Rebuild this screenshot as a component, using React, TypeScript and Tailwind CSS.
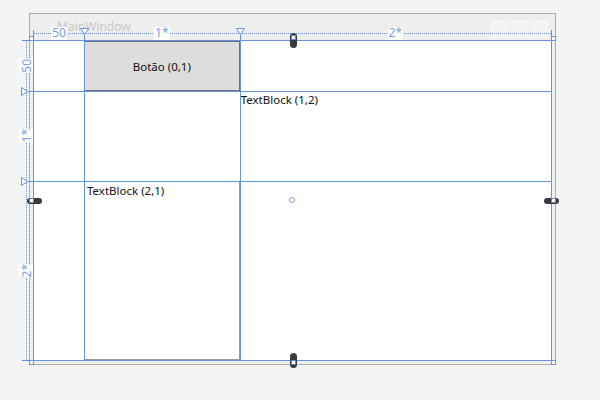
const blue = "#6592e4";

const Handle = ({ className, sq }: { className: string; sq: string }) => (
  <div className={`absolute rounded-full bg-[#3a3a3a] ${className}`}>
    <div className={`absolute h-[5px] w-[5px] border border-[#4f86ea] bg-white ${sq}`} />
  </div>
);

const Corner = ({ className }: { className: string }) => (
  <div className={`absolute h-[5px] w-[5px] border border-[#6592e4] bg-white ${className}`} />
);

const DownTri = ({ className }: { className: string }) => (
  <svg className={`absolute ${className}`} width="9" height="7" viewBox="0 0 9 7">
    <path d="M0.5 0.5 L8.5 0.5 L4.5 6.5 Z" fill="white" stroke={blue} strokeWidth="1" />
  </svg>
);

const RightTri = ({ className }: { className: string }) => (
  <svg className={`absolute ${className}`} width="7" height="9" viewBox="0 0 7 9">
    <path d="M0.5 0.5 L6.5 4.5 L0.5 8.5 Z" fill="white" stroke={blue} strokeWidth="1" />
  </svg>
);

export default function App() {
  return (
    <div className="relative h-[400px] w-[600px] overflow-hidden bg-[#f4f4f4] font-['Noto_Sans',sans-serif] text-[11.5px]">
      {/* window frame */}
      <div className="absolute left-[29px] top-[13px] flex h-[352px] w-[527px] flex-col border border-[#ababab] bg-[#f0f0f0]">
        <div className="flex h-[27px] shrink-0 items-start justify-between bg-[#eeeeee] pl-[27px] pr-[6px] pt-[6px]">
          <span className="text-[12px] leading-[14px] text-[#c9c9c9]">MainWindow</span>
          <div className="flex gap-[2px]">
            <div className="h-[18px] w-[18px] rounded-[2px] bg-[#f4f4f4]" />
            <div className="h-[18px] w-[18px] rounded-[2px] bg-[#f4f4f4]" />
            <div className="h-[18px] w-[18px] rounded-[2px] bg-[#f4f4f4]" />
          </div>
        </div>
        <div className="ml-[4px] h-[319px] w-[517px] bg-white">
          <div className="grid h-full w-full grid-cols-[50px_1fr_2fr] grid-rows-[50px_1fr_2fr]">
            <div />
            <button className="flex items-center justify-center border border-[#707070] bg-[#dddddd] pt-[1px] text-[11.5px] text-[#111]">
              Botão (0,1)
            </button>
            <div />
            <div />
            <div />
            <div className="pl-[1px] pt-[1px] leading-[16px] text-[#111]">TextBlock (1,2)</div>
            <div />
            <div className="border-b border-r border-[#9a9a9a] pl-[3px] pt-[2px] leading-[16px] text-[#111]">
              TextBlock (2,1)
            </div>
            <div />
          </div>
        </div>
      </div>

      {/* top ruler */}
      <div className="absolute left-[34px] top-[27px] h-[13px] w-[517px]">
        <div className="absolute left-0 right-0 top-[6px] border-t border-dotted border-[#6592e4]" />
        <div className="relative grid h-full grid-cols-[50px_1fr_2fr] text-[12px] leading-[12px] text-[#7b9de8]">
          <div className="flex justify-center"><span className="bg-white px-[1px]">50</span></div>
          <div className="flex justify-center"><span className="bg-white px-[1px]">1*</span></div>
          <div className="flex justify-center"><span className="bg-white px-[1px]">2*</span></div>
        </div>
      </div>

      {/* left ruler */}
      <div className="absolute left-[19px] top-[41px] h-[319px] w-[14px]">
        <div className="absolute bottom-0 left-[7px] top-0 border-l border-dotted border-[#6592e4]" />
        <div className="relative grid h-full grid-rows-[50px_1fr_2fr] text-[12px] leading-[12px] text-[#7b9de8]">
          <div className="flex items-center justify-center"><span className="rotate-180 bg-white py-[2px] [writing-mode:vertical-rl]">50</span></div>
          <div className="flex items-center justify-center"><span className="rotate-180 bg-white py-[2px] [writing-mode:vertical-rl]">1*</span></div>
          <div className="flex items-center justify-center"><span className="rotate-180 bg-white py-[2px] [writing-mode:vertical-rl]">2*</span></div>
        </div>
      </div>

      {/* grid adorner lines */}
      <div className="absolute left-[22px] top-[40px] h-px w-[530px] bg-[#6592e4]" />
      <div className="absolute left-[22px] top-[91px] h-px w-[530px] bg-[#6592e4]" />
      <div className="absolute left-[22px] top-[181px] h-px w-[530px] bg-[#6592e4]" />
      <div className="absolute left-[22px] top-[360px] h-px w-[530px] bg-[#6592e4]" />
      <div className="absolute left-[33px] top-[30px] h-[331px] w-px bg-[#6592e4]" />
      <div className="absolute left-[84px] top-[30px] h-[331px] w-px bg-[#6592e4]" />
      <div className="absolute left-[240px] top-[30px] h-[331px] w-px bg-[#6592e4]" />
      <div className="absolute left-[551px] top-[30px] h-[331px] w-px bg-[#6592e4]" />

      <DownTri className="left-[80px] top-[28px]" />
      <DownTri className="left-[236px] top-[28px]" />
      <RightTri className="left-[21px] top-[87px]" />
      <RightTri className="left-[21px] top-[177px]" />

      <Corner className="left-[29px] top-[36px]" />
      <Corner className="left-[551px] top-[36px]" />
      <Corner className="left-[29px] top-[360px]" />
      <Corner className="left-[551px] top-[360px]" />

      {/* resize handles */}
      <Handle className="left-[290px] top-[33px] h-[15px] w-[7px]" sq="left-[1px] top-[2px]" />
      <Handle className="left-[290px] top-[353px] h-[15px] w-[7px]" sq="left-[1px] top-[7px]" />
      <Handle className="left-[27px] top-[198px] h-[6px] w-[15px]" sq="left-[2px] top-[0px]" />
      <Handle className="left-[544px] top-[198px] h-[6px] w-[15px]" sq="left-[7px] top-[0px]" />

      <div className="absolute left-[289px] top-[197px] h-[6px] w-[6px] rounded-full border border-[#7aa2ee] bg-white" />
    </div>
  );
}
